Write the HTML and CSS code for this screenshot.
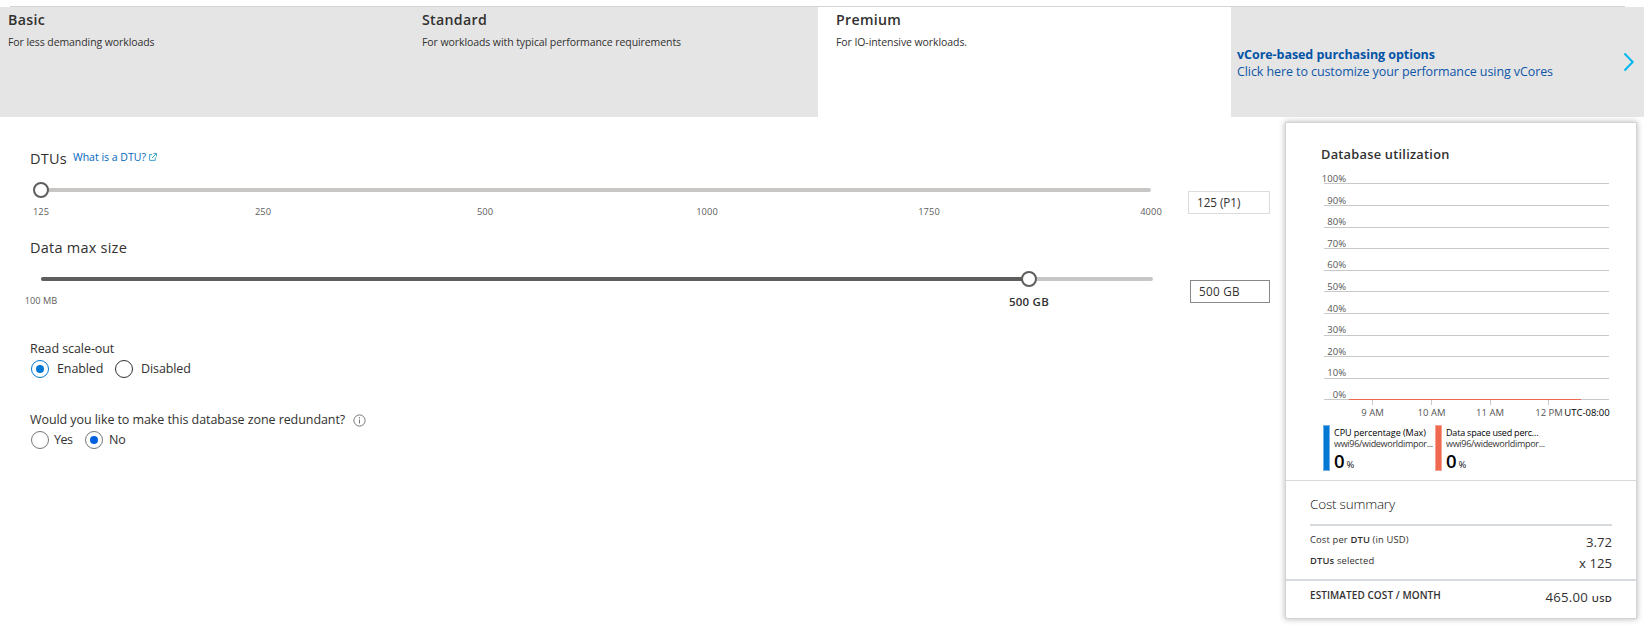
FILE: index.html
```html
<!DOCTYPE html>
<html lang="en">
<head>
<meta charset="utf-8">
<title>Configure database</title>
<link rel="stylesheet" href="styles.css">
</head>
<body>
<div class="rule"></div>
<nav class="tiers">
  <div class="tier"><h2 class="tier-name">Basic</h2><p class="tier-desc">For less demanding workloads</p></div>
  <div class="tier"><h2 class="tier-name">Standard</h2><p class="tier-desc">For workloads with typical performance requirements</p></div>
  <div class="tier tier-active"><h2 class="tier-name">Premium</h2><p class="tier-desc">For IO-intensive workloads.</p></div>
  <a class="vcore">
    <span class="vcore-text"><strong>vCore-based purchasing options</strong><span>Click here to customize your performance using vCores</span></span>
    <svg class="chevron" width="12" height="20" viewBox="0 0 12 20"><path d="M1.500 1.500 9.700 10l-8.200 8.500" fill="none" stroke="#00b7f0" stroke-width="2"/></svg>
  </a>
</nav>
<main class="main">
  <section class="config">
    <div class="heading"><h3 class="label-lg">DTUs</h3>
      <a class="help">What is a DTU?<svg class="ext" width="8" height="8" viewBox="0 0 9 9"><path d="M3.500 1.800H.7v6.500h6.300V5M3.300 5.700 8 1M5 .6h3.400V4" fill="none" stroke="#3aa0c8" stroke-width="1.100"/></svg></a></div>
    <div class="slider-row">
      <div class="slider">
        <div class="track"><span class="thumb thumb-start"></span></div>
        <div class="marks"><span>125</span><span>250</span><span>500</span><span>1000</span><span>1750</span><span>4000</span></div>
      </div>
      <div class="box box-dtu">125 (P1)</div>
    </div>
    <h3 class="label-lg size-heading">Data max size</h3>
    <div class="slider-row">
      <div class="slider slider-size">
        <div class="track"><span class="fill"></span><span class="thumb thumb-size"></span></div>
        <div class="ends"><span class="end">100 MB</span><strong class="end current">500 GB</strong></div>
      </div>
      <div class="box box-size">500 GB</div>
    </div>
    <div class="field">
      <div class="question">Read scale-out</div>
      <div class="options">
        <span class="radio radio-blue"></span><span class="opt opt-enabled">Enabled</span>
        <span class="radio radio-dark"></span><span class="opt opt-disabled">Disabled</span>
      </div>
    </div>
    <div class="field field-zone">
      <div class="question">Would you like to make this database zone redundant?
        <svg class="info" width="13" height="13" viewBox="0 0 13 13"><circle cx="6.500" cy="6.500" r="5.600" fill="none" stroke="#777" stroke-width="1"/><path d="M6.500 5.500v4M6.500 3.200v1.300" stroke="#777" stroke-width="1"/></svg></div>
      <div class="options">
        <span class="radio"></span><span class="opt opt-yes">Yes</span>
        <span class="radio radio-no"></span><span class="opt opt-no">No</span>
      </div>
    </div>
  </section>
  <aside class="card">
    <section class="usage">
      <h3 class="usage-title">Database utilization</h3>
      <svg class="chart" width="350" height="256" viewBox="0 0 350 256">
        <path class="grid" d="M38 20.500H323M38 42.500H323M38 64.500H323M38 85.500H323M38 107.500H323M38 128.500H323M38 150.500H323M38 172.500H323M38 193.500H323M38 215.500H323M38 236.500H323M86.500 237v5M145.500 237v5M204.500 237v5M262.500 237v5"/>
        <path class="series" d="M63 236.500H295"/>
        <g class="y-labels"><text x="60" y="19">100%</text><text x="60" y="41">90%</text><text x="60" y="62">80%</text><text x="60" y="84">70%</text><text x="60" y="105">60%</text><text x="60" y="127">50%</text><text x="60" y="149">40%</text><text x="60" y="170">30%</text><text x="60" y="192">20%</text><text x="60" y="213">10%</text><text x="60" y="235">0%</text></g>
        <g class="x-labels"><text x="86.500" y="253">9 AM</text><text x="145.500" y="253">10 AM</text><text x="204" y="253">11 AM</text><text x="263" y="253">12 PM</text><text class="zone" x="301" y="253">UTC-08:00</text></g>
      </svg>
      <div class="legend">
        <div class="metric"><i class="bar bar-cpu"></i><div><div class="m-name">CPU percentage (Max)</div><div class="m-res">wwi96/wideworldimpor...</div><div class="m-val"><b>0</b><small>%</small></div></div></div>
        <div class="metric"><i class="bar bar-data"></i><div><div class="m-name m-name-data">Data space used perc...</div><div class="m-res">wwi96/wideworldimpor...</div><div class="m-val"><b>0</b><small>%</small></div></div></div>
      </div>
    </section>
    <section class="cost">
      <h3 class="cost-title">Cost summary</h3>
      <div class="cost-lines">
        <div class="line"><span class="c-label">Cost per <b>DTU</b> (in USD)</span><span class="c-val">3.72</span></div>
        <div class="line"><span class="c-label"><b>DTUs</b> selected</span><span class="c-val">x 125</span></div>
      </div>
    </section>
    <div class="line total"><span class="t-label">ESTIMATED COST / MONTH</span><span class="c-val">465.00 <small>USD</small></span></div>
  </aside>
</main>
</body>
</html>
```
FILE: styles.css
```css
* { box-sizing: border-box; }
body { margin: 0; padding-top: 6px; width: 1644px; height: 631px; overflow: hidden; background: #fff; color: #323130; font-family: "Open Sans", "Noto Sans", sans-serif; font-size: 12.500px; }
h2, h3, p { margin: 0; font-weight: 400; }
.rule { height: 1px; margin: 0 19px 0 10px; background: #d2d5d5; }
.tiers { display: grid; grid-template-columns: 414px 404px 413px 413px; height: 110px; }
.tier { padding: 2px 8px; background: #e5e5e5; }
.tier-active { background: #fff; padding-left: 18px; }
.tier-name { font-size: 14.200px; line-height: 21px; font-weight: 550; letter-spacing: .3px; }
.tier-desc { margin-top: 4px; font-size: 10.500px; line-height: 16px; letter-spacing: -.08px; white-space: nowrap; }
.vcore { display: flex; align-items: center; justify-content: space-between; padding: 1px 9px 0 6px; background: #e5e5e5; color: #0f56a8; line-height: 17px; font-size: 12.500px; }
.vcore-text { display: flex; flex-direction: column; white-space: nowrap; letter-spacing: -.09px; }
.vcore strong { font-weight: 700; color: #0354a6; letter-spacing: -.06px; }
.chevron { margin-bottom: 2px; }
.main { display: flex; }
.config { width: 1286px; padding: 31px 0 0 30px; }
.heading { display: flex; gap: 6px; height: 20px; }
.label-lg { font-size: 14.500px; line-height: 21px; letter-spacing: .24px; }
.help { display: flex; align-items: center; gap: 3px; height: 16px; margin-top: 1px; font-size: 10.500px; color: #0066c0; }
.slider-row { display: flex; align-items: flex-start; }
.slider { width: 1110px; margin: 20px 37px 0 11px; }
.track { position: relative; height: 4px; border-radius: 2px; background: #c8c6c4; }
.thumb { position: absolute; top: -6px; width: 16px; height: 16px; border: 2px solid #605e5c; border-radius: 50%; background: #fff; }
.thumb-start { left: -8px; }
.marks { display: grid; grid-template-columns: repeat(6, 222px); width: 1332px; margin: 13px 0 0 -111px; text-align: center; font-size: 9.300px; line-height: 14px; letter-spacing: .1px; color: #605e5c; }
.box { height: 23px; padding: 0 8px; line-height: 21px; font-size: 11.700px; border: 1px solid #dcdcdc; }
.box-dtu { width: 82px; margin-top: 23px; letter-spacing: -.05px; }
.size-heading { height: 20px; margin-top: 19px; line-height: 19px; }
.slider-size { width: 1112px; margin-top: 19px; }
.fill { display: block; width: 988px; height: 4px; border-radius: 2px; background: #605e5c; }
.thumb-size { left: 980px; }
.ends { display: flex; gap: 908px; margin: 12px 0 0 -40px; line-height: 15px; height: 15px; text-align: center; font-size: 9.200px; color: #605e5c; }
.end { width: 80px; }
.current { font-size: 11.500px; font-weight: 600; color: #323130; line-height: 17px; letter-spacing: .22px; }
.box-size { width: 80px; margin-top: 22px; letter-spacing: .3px; border-color: #8a8886; }
.field { margin-top: 32px; line-height: 18px; }
.question { display: flex; align-items: center; letter-spacing: -.075px; }
.info { margin: 1px 0 0 8px; }
.options { display: flex; margin: 2px 0 0 1px; letter-spacing: -.1px; }
.field-zone { margin-top: 33px; }
.radio { display: grid; place-items: center; width: 18px; height: 18px; border: 1px solid #767676; border-radius: 50%; background: #fff; }
.radio-dark { border-color: #323130; }
.radio-blue { border-color: #0078d4; }
.radio-blue::after, .radio-no::after { content: ""; width: 8px; height: 8px; border-radius: 50%; background: #0078d4; }
.radio-no::after { background: #0060df; }
.opt { white-space: nowrap; }
.opt-enabled { width: 66px; padding-left: 8px; }
.opt-disabled { padding-left: 8px; }
.opt-yes { width: 36px; padding-left: 5px; letter-spacing: -.5px; }
.opt-no { padding-left: 6px; }
.card { width: 350px; height: 495px; margin-top: 6px; background: #fff; box-shadow: 0 0 0 1px #d2d4d6, 0 0 6px 1px rgba(0, 0, 0, .3); }
.usage { height: 358px; padding-top: 22px; border-bottom: 1px solid #d6dade; }
.usage-title { padding-left: 35px; font-size: 12.800px; line-height: 18px; font-weight: 550; letter-spacing: .25px; }
.chart { display: block; font-size: 9.500px; }
.grid { fill: none; stroke: #c8c8c8; }
.series { fill: none; stroke: #ef6950; }
.y-labels { text-anchor: end; fill: #555; }
.x-labels { text-anchor: middle; fill: #555; }
.x-labels .zone { fill: #000; }
.legend { display: flex; margin-top: 6px; padding-left: 37px; color: #111; }
.metric { display: flex; gap: 4px; width: 112px; height: 46px; white-space: nowrap; }
.bar { flex: none; width: 7px; height: 46px; border: 1px solid #71b3e8; background: #0078d4; }
.bar-data { border-color: #f6a495; background: #ef6950; }
.m-name { margin-top: 2px; font-size: 9px; line-height: 11px; letter-spacing: -.04px; color: #000; }
.m-name-data { letter-spacing: -.2px; }
.m-res { font-size: 9px; line-height: 11px; letter-spacing: -.3px; color: #333; }
.m-val { display: flex; align-items: baseline; gap: 2px; margin-top: 2px; line-height: 20px; }
.m-val b { font-size: 18.500px; font-weight: 600; color: #000; }
.m-val small { font-size: 9.500px; }
.cost { padding: 13px 24px 0; height: 98px; }
.cost-title { font-size: 13.500px; line-height: 20px; font-weight: 300; letter-spacing: -.2px; color: #111; }
.cost-lines { margin-top: 10px; padding-top: 7px; border-top: 2px solid #d6dade; }
.line { display: flex; justify-content: space-between; height: 21px; }
.c-label { font-size: 9.400px; line-height: 14px; letter-spacing: .15px; }
.c-label b { font-weight: 600; }
.c-val { font-size: 13.200px; line-height: 18px; font-weight: 500; }
.c-val small { font-size: 9.600px; font-weight: 600; }
.total { height: 39px; padding: 7px 24px 0; border-top: 2px solid #d6dade; }
.total .c-val { letter-spacing: .25px; }
.t-label { font-size: 10px; line-height: 14px; font-weight: 600; letter-spacing: .07px; }
```
